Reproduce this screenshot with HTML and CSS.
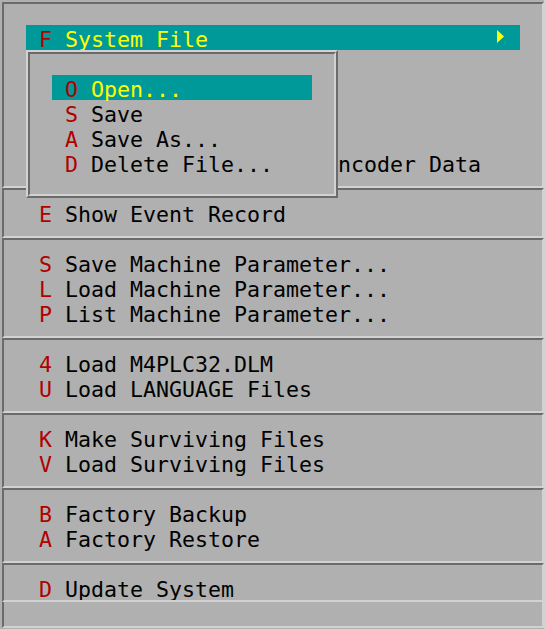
FILE: index.html
```html
<!doctype html>

<html>
  <head>
    <meta charset="UTF-8" />
    <title>System Menu</title>
    <link rel="stylesheet" href="styles.css">
  </head>

  <body>
    <div class="screen">
      <div class="group group-top">
        <div class="item active"><span class="key">F</span><span class="label"> System File</span><svg class="arrow" width="7" height="13" viewBox="0 0 7 13"><polygon points="0,0 7,6.5 0,13" fill="#ffff00" /></svg></div>
        <!-- rows covered by the submenu -->
        <div class="covered"></div>
        <div class="item"><span class="key">M</span> Show Absolute Motor Encoder Data</div>
      </div>

      <div class="group">
        <div class="item"><span class="key">E</span> Show Event Record</div>
      </div>

      <div class="group">
        <div class="item"><span class="key">S</span> Save Machine Parameter...</div>
        <div class="item"><span class="key">L</span> Load Machine Parameter...</div>
        <div class="item"><span class="key">P</span> List Machine Parameter...</div>
      </div>

      <div class="group">
        <div class="item"><span class="key">4</span> Load M4PLC32.DLM</div>
        <div class="item"><span class="key">U</span> Load LANGUAGE Files</div>
      </div>

      <div class="group">
        <div class="item"><span class="key">K</span> Make Surviving Files</div>
        <div class="item"><span class="key">V</span> Load Surviving Files</div>
      </div>

      <div class="group">
        <div class="item"><span class="key">B</span> Factory Backup</div>
        <div class="item"><span class="key">A</span> Factory Restore</div>
      </div>

      <div class="group group-clip">
        <div class="item"><span class="key">D</span> Update System</div>
      </div>

      <div class="group group-status"></div>

      <!-- submenu of System File -->
      <div class="popup">
        <div class="popup-inner">
          <div class="item active"><span class="key">O</span><span class="label"> Open...</span></div>
          <div class="item"><span class="key">S</span> Save</div>
          <div class="item"><span class="key">A</span> Save As...</div>
          <div class="item"><span class="key">D</span> Delete File...</div>
        </div>
      </div>
    </div>
  </body>
</html>
```

FILE: styles.css
```css
* {
  box-sizing: border-box;
}

body {
  margin: 0;
  background-color: #b0b0b0;
  color: #000;
  font-family: "DejaVu Sans Mono", monospace;
  font-size: 21.6px;
}

.screen {
  position: relative;
  width: 546px;
  height: 629px;
  padding: 2px 0 1px 2px;
  border-right: 2px solid #d2d2d2;
}

/* etched boxes */
.group {
  border-style: solid;
  border-width: 2px;
  border-color: #6b6b6b #d2d2d2 #d2d2d2 #6b6b6b;
  padding: 10px 0 11px 22px;
}

.group-top {
  padding-top: 21px;
}

.covered {
  height: 100px;
}

.group-clip {
  height: 39px;
  padding-bottom: 0;
  overflow: hidden;
}

.group-status {
  height: 26px;
  border-top: none;
  padding: 0;
}

.item {
  display: flex;
  align-items: flex-start;
  width: 494px;
  height: 25px;
  line-height: 29px;
  padding-left: 13px;
  white-space: pre;
}

.key {
  color: #b00000;
}

.item.active {
  background-color: #009999;
}

.item.active .label {
  flex: 1;
  color: #ffff00;
}

.arrow {
  align-self: center;
  margin-right: 16px;
  margin-top: -2px;
}

/* submenu */
.popup {
  position: absolute;
  left: 26px;
  top: 50px;
  width: 312px;
  height: 148px;
  border: 2px solid;
  border-color: #d2d2d2 #6b6b6b #6b6b6b #d2d2d2;
  background-color: #b0b0b0;
}

.popup-inner {
  height: 100%;
  border: 2px solid;
  border-color: #6b6b6b #d2d2d2 #d2d2d2 #6b6b6b;
  padding: 21px 22px 0;
}

.popup .item {
  width: 260px;
}
```
